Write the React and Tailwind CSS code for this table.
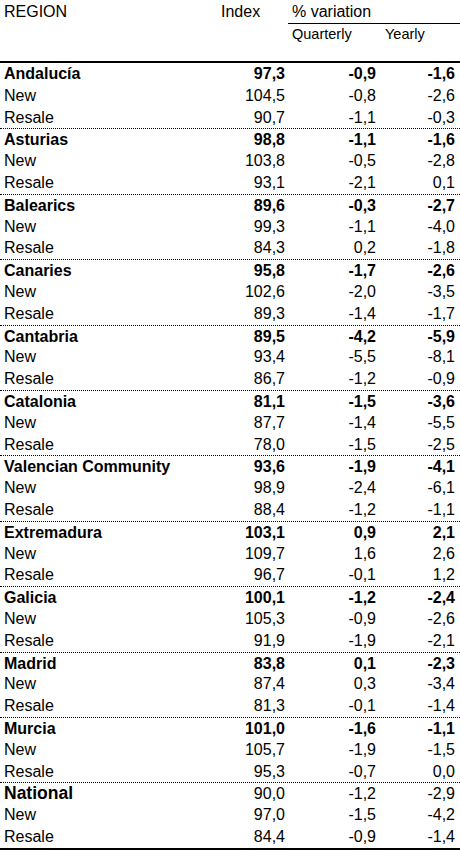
const regions = [
  ['Andalucía', ['97,3', '-0,9', '-1,6'], ['104,5', '-0,8', '-2,6'], ['90,7', '-1,1', '-0,3']],
  ['Asturias', ['98,8', '-1,1', '-1,6'], ['103,8', '-0,5', '-2,8'], ['93,1', '-2,1', '0,1']],
  ['Balearics', ['89,6', '-0,3', '-2,7'], ['99,3', '-1,1', '-4,0'], ['84,3', '0,2', '-1,8']],
  ['Canaries', ['95,8', '-1,7', '-2,6'], ['102,6', '-2,0', '-3,5'], ['89,3', '-1,4', '-1,7']],
  ['Cantabria', ['89,5', '-4,2', '-5,9'], ['93,4', '-5,5', '-8,1'], ['86,7', '-1,2', '-0,9']],
  ['Catalonia', ['81,1', '-1,5', '-3,6'], ['87,7', '-1,4', '-5,5'], ['78,0', '-1,5', '-2,5']],
  ['Valencian Community', ['93,6', '-1,9', '-4,1'], ['98,9', '-2,4', '-6,1'], ['88,4', '-1,2', '-1,1']],
  ['Extremadura', ['103,1', '0,9', '2,1'], ['109,7', '1,6', '2,6'], ['96,7', '-0,1', '1,2']],
  ['Galicia', ['100,1', '-1,2', '-2,4'], ['105,3', '-0,9', '-2,6'], ['91,9', '-1,9', '-2,1']],
  ['Madrid', ['83,8', '0,1', '-2,3'], ['87,4', '0,3', '-3,4'], ['81,3', '-0,1', '-1,4']],
  ['Murcia', ['101,0', '-1,6', '-1,1'], ['105,7', '-1,9', '-1,5'], ['95,3', '-0,7', '0,0']],
];

const national = ['National', ['90,0', '-1,2', '-2,9'], ['97,0', '-1,5', '-4,2'], ['84,4', '-0,9', '-1,4']];

function Row({ label, values, bold, labelClass = '', dotted }) {
  return (
    <div className={`flex h-[21.8px] leading-[21.8px] ${dotted ? 'border-t border-dotted border-black' : ''} ${bold ? 'font-bold' : ''}`}>
      <div className={`w-[200px] pl-[4px] whitespace-nowrap ${labelClass}`}>{label}</div>
      <div className="w-[88px] pr-[3px] text-right">{values[0]}</div>
      <div className="w-[91px] pr-[3px] text-right">{values[1]}</div>
      <div className="w-[81px] pr-[5px] text-right">{values[2]}</div>
    </div>
  );
}

export default function App() {
  return (
    <div className="w-[460px] h-[851px] bg-white text-black text-[16px]" style={{ fontFamily: '"Liberation Sans", Arial, sans-serif' }}>
      <div className="h-[61px] border-b-2 border-black box-content">
        <div className="flex h-[24px] leading-[23px]">
          <div className="w-[200px] pl-[4px]">REGION</div>
          <div className="w-[88px] pl-[21px]">Index</div>
          <div className="flex-1 pl-[4px] border-b border-black">% variation</div>
        </div>
        <div className="flex h-[20px] leading-[20px] text-[14.5px]">
          <div className="w-[288px]" />
          <div className="w-[91px] pl-[4px]">Quarterly</div>
          <div className="w-[81px] pl-[6px]">Yearly</div>
        </div>
      </div>
      <div className="border-b-2 border-black">
        {regions.map(([name, r, n, s], i) => (
          <div key={name}>
            <Row label={name} values={r} bold dotted={i > 0} />
            <Row label="New" values={n} />
            <Row label="Resale" values={s} />
          </div>
        ))}
        <Row label={national[0]} values={national[1]} labelClass="font-bold text-[17.5px]" dotted />
        <Row label="New" values={national[2]} />
        <Row label="Resale" values={national[3]} />
      </div>
    </div>
  );
}
